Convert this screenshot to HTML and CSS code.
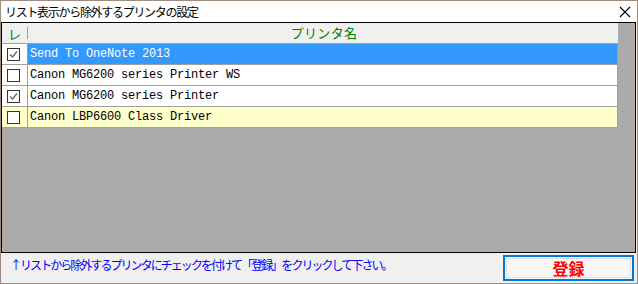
FILE: index.html
```html
<!DOCTYPE html>
<html lang="ja">
<head>
  <meta charset="UTF-8">
  <title>リスト表示から除外するプリンタの設定</title>
  <link rel="stylesheet" href="styles.css">
</head>
<body>
  <div class="window">
    <!-- タイトルバー -->
    <div class="titlebar">
      <span class="title">リスト表示から除外するプリンタの設定</span>
      <svg class="close" width="12" height="12" viewBox="0 0 12 12">
        <path d="M1 1 L11 11 M11 1 L1 11" stroke="#000" stroke-width="1.1" fill="none"/>
      </svg>
    </div>

    <!-- プリンタ一覧 -->
    <div class="grid">
      <div class="list">
        <div class="head">
          <div class="cell-check head-check"><span>レ</span></div>
          <div class="cell-name head-name">プリンタ名</div>
        </div>
        <div class="row selected">
          <div class="cell-check"><span class="box on"></span></div>
          <div class="cell-name">Send To OneNote 2013</div>
        </div>
        <div class="row">
          <div class="cell-check"><span class="box"></span></div>
          <div class="cell-name">Canon MG6200 series Printer WS</div>
        </div>
        <div class="row">
          <div class="cell-check"><span class="box on"></span></div>
          <div class="cell-name">Canon MG6200 series Printer</div>
        </div>
        <div class="row current">
          <div class="cell-check"><span class="box"></span></div>
          <div class="cell-name">Canon LBP6600 Class Driver</div>
        </div>
      </div>
    </div>

    <!-- 下部パネル -->
    <div class="footer">
      <p class="hint">↑リストから除外するプリンタにチェックを付けて「登録」をクリックして下さい。</p>
      <button class="btn-save"><span>登録</span></button>
    </div>
  </div>
</body>
</html>
```

FILE: styles.css
```css
* {
  margin: 0;
  padding: 0;
  box-sizing: border-box;
}
body {
  background: #fff;
  font-family: "Noto Sans CJK JP", "Noto Sans", sans-serif;
}

/* ウィンドウ枠 */
.window {
  width: 638px;
  height: 284px;
  border: 1px solid #a08c7c;
  background: #f0f0f0;
  display: flex;
  flex-direction: column;
}

.titlebar {
  height: 21px;
  background: #fff;
  display: flex;
  align-items: center;
  justify-content: space-between;
  padding: 0 6px 0 4px;
}
.title {
  font-size: 12px;
  letter-spacing: -1.3px;
  color: #000;
  line-height: 14px;
}
.close {
  margin-top: 1px;
}

/* 一覧グリッド */
.grid {
  height: 231px;
  margin-right: 1px;
  border: 1px solid #000;
  background: #ababab;
}
.list {
  width: 616px;
}
.head,
.row {
  display: flex;
  height: 21px;
  border-bottom: 1px solid #a0a0a0;
}
.head {
  background: #f0f0f0;
  color: #008000;
  font-size: 13px;
}
.cell-check {
  width: 26px;
  border-right: 1px solid #a0a0a0;
  display: flex;
  align-items: center;
  justify-content: center;
  background: #fff;
}
.cell-name {
  width: 590px;
  border-right: 1px solid #a0a0a0;
  padding-left: 2px;
  line-height: 20px;
  font-family: "Liberation Mono", monospace;
  font-size: 12px;
  letter-spacing: -0.2px;
  color: #000;
  background: #fff;
}
.head .cell-check,
.head .cell-name {
  background: #f0f0f0;
}
.head-check {
  border-right: none;
  justify-content: flex-start;
  padding-left: 6px;
  position: relative;
}
.head-check::after {
  content: "";
  position: absolute;
  right: 0;
  top: 4px;
  height: 12px;
  border-right: 1px solid #a0a0a0;
}
.head-name {
  text-align: center;
  font-family: "Noto Sans CJK JP", sans-serif;
  font-size: 13px;
  letter-spacing: 0.3px;
  color: #008000;
  border-right: none;
  line-height: 19px;
}

.row.selected .cell-name {
  background: #3399ff;
  color: #fff;
}
.row.current .cell-check,
.row.current .cell-name {
  background: #ffffcc;
}

/* チェックボックス */
.box {
  width: 13px;
  height: 13px;
  border: 1px solid #333;
  background: #fff;
  margin-left: -2px;
}
.box.on {
  background: #fff url("data:image/svg+xml,%3Csvg xmlns='http://www.w3.org/2000/svg' width='11' height='11'%3E%3Cpath d='M2 5.5 L4.5 8 L9 2.5' stroke='%23666' stroke-width='1.3' fill='none'/%3E%3C/svg%3E") no-repeat center;
}

/* 下部パネル */
.footer {
  flex: 1;
  display: flex;
  align-items: flex-start;
  justify-content: space-between;
  padding: 2px 3px 0 9px;
}
.hint {
  margin-top: 3px;
  font-size: 12px;
  letter-spacing: -1.95px;
  color: #0000ff;
  line-height: 14px;
}
.btn-save {
  width: 131px;
  height: 26px;
  border: 2px solid #0078d7;
  background: #f7f7f7;
  padding: 1px;
  font-family: "Noto Sans CJK JP", sans-serif;
}
.btn-save span {
  display: block;
  height: 100%;
  border: 1px dotted #ccc;
  color: #ff0000;
  font-size: 16px;
  font-weight: bold;
  line-height: 18px;
}
```
